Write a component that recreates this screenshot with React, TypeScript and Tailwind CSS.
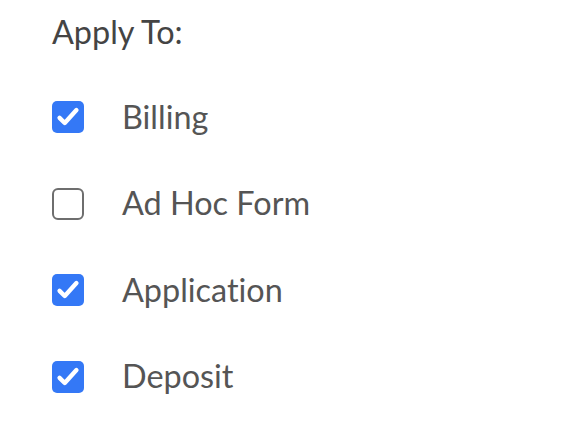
import React, { useState } from 'react';

const items = [
  { name: 'Billing', checked: true },
  { name: 'Ad Hoc Form', checked: false },
  { name: 'Application', checked: true },
  { name: 'Deposit', checked: true },
];

const Box = ({ checked }: { checked: boolean }) =>
  checked ? (
    <span className="w-[32px] h-[32px] rounded-[5px] bg-[#3478f6] flex items-center justify-center flex-shrink-0">
      <svg width="26" height="26" viewBox="0 0 24 24" fill="none">
        <path d="M4.2 12.8l4.8 4.8L19.8 5.6" stroke="white" strokeWidth="4" strokeLinecap="round" strokeLinejoin="round" />
      </svg>
    </span>
  ) : (
    <span className="w-[32px] h-[32px] rounded-[6px] border-2 border-[#6e6e6e] bg-white flex-shrink-0" />
  );

export default function App() {
  const [state, setState] = useState(items);

  return (
    <div
      className="w-[580px] h-[442px] bg-white pl-[52px] pt-[10px]"
      style={{ fontFamily: 'Lato, "Noto Sans", sans-serif', fontVariantLigatures: 'none' }}
    >
      <h2 className="text-[32.4px] leading-[44px] text-[#444444]">Apply To:</h2>
      <div className="mt-[47px] flex flex-col gap-[54.5px]">
        {state.map((item, i) => (
          <label
            key={item.name}
            className="flex items-center gap-[38px] h-[32px] cursor-pointer"
            onClick={() => setState(state.map((s, j) => (j === i ? { ...s, checked: !s.checked } : s)))}
          >
            <Box checked={item.checked} />
            <span className="text-[32.4px] text-[#555555]">{item.name}</span>
          </label>
        ))}
      </div>
    </div>
  );
}
